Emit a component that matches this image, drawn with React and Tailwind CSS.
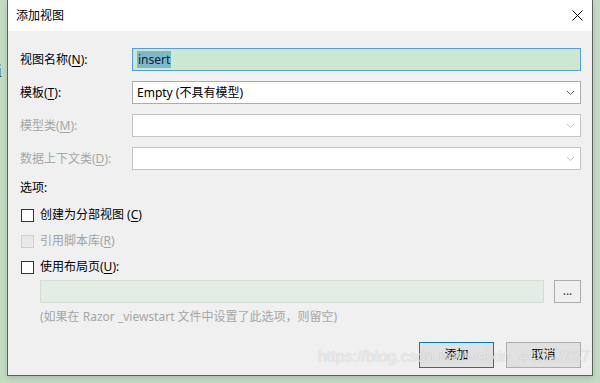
import { useState } from 'react';

function Chevron({ disabled }) {
  return (
    <svg width="9" height="6" viewBox="0 0 9 6" className="shrink-0">
      <polyline points="1,1 4.5,4.5 8,1" fill="none" stroke={disabled ? '#c4c4c4' : '#606060'} strokeWidth="1" />
    </svg>
  );
}

function Key({ k }) {
  return <span className="underline underline-offset-2">{k}</span>;
}

function Checkbox({ checked, disabled, children }) {
  return (
    <div className="flex items-center h-[16px]">
      <div className={`w-[13px] h-[13px] border ml-[1px] ${disabled ? 'border-[#cfcfcf] bg-[#e8e8e8]' : 'border-[#333333] bg-white'}`}>
        {checked && <span className="block text-[10px] leading-none">✓</span>}
      </div>
      <span className={`ml-[6px] ${disabled ? 'text-[#a2a2a2]' : 'text-black'}`}>{children}</span>
    </div>
  );
}

export default function App() {
  const [name] = useState('insert');

  return (
    <div className="w-[600px] h-[383px] bg-[#c3ddc3] flex font-['Noto_Sans','Noto_Sans_CJK_SC',sans-serif] text-[12px] overflow-hidden relative">
      <div className="w-[7px] shrink-0 overflow-hidden">
        <span className="block mt-[58px] -ml-[3px] font-['Liberation_Serif',serif] text-[18px] text-[#2a2a3a]">i</span>
      </div>

      <div className="w-[586px] h-[376px] shrink-0 border-x border-b border-[#5a625a] bg-[#f0f0f0] flex flex-col shadow-[0_2px_6px_rgba(0,0,0,0.15)]">
        <div className="h-[31px] bg-white flex items-center justify-between pl-[8px] pr-[9px]">
          <span className="text-black">添加视图</span>
          <svg width="11" height="11" viewBox="0 0 11 11">
            <path d="M0.5 0.5 L10.5 10.5 M10.5 0.5 L0.5 10.5" stroke="#000" strokeWidth="1" />
          </svg>
        </div>

        <div className="flex flex-col pt-[17px] pl-[12px] pr-[11px]">
          <div className="flex items-center h-[23px]">
            <span className="w-[112px] shrink-0">视图名称(<Key k="N" />):</span>
            <div className="flex-1 h-full bg-[#cde8d0] border border-[#529ce9] flex items-center pl-[4px]">
              <span className="bg-[#7db8c8] text-[#10203f] px-[1px] leading-[17px]">{name}</span>
            </div>
          </div>

          <div className="flex items-center h-[23px] mt-[10px]">
            <span className="w-[112px] shrink-0">模板(<Key k="T" />):</span>
            <div className="flex-1 h-full bg-white border border-[#adadad] flex items-center justify-between pl-[4px] pr-[5px]">
              <span>Empty (不具有模型)</span>
              <Chevron />
            </div>
          </div>

          <div className="flex items-center h-[23px] mt-[10px]">
            <span className="w-[112px] shrink-0 text-[#a6a6a6]">模型类(<Key k="M" />):</span>
            <div className="flex-1 h-full bg-white border border-[#c4c4c4] flex items-center justify-end pr-[5px]">
              <Chevron disabled />
            </div>
          </div>

          <div className="flex items-center h-[23px] mt-[10px]">
            <span className="w-[112px] shrink-0 text-[#a6a6a6]">数据上下文类(<Key k="D" />):</span>
            <div className="flex-1 h-full bg-white border border-[#c4c4c4] flex items-center justify-end pr-[5px]">
              <Chevron disabled />
            </div>
          </div>

          <div className="h-[16px] mt-[10px] flex items-center">选项:</div>

          <div className="mt-[11px]">
            <Checkbox>创建为分部视图 (<Key k="C" />)</Checkbox>
          </div>
          <div className="mt-[10px]">
            <Checkbox disabled>引用脚本库(<Key k="R" />)</Checkbox>
          </div>
          <div className="mt-[10px]">
            <Checkbox>使用布局页(<Key k="U" />):</Checkbox>
          </div>

          <div className="flex h-[23px] mt-[5px] pl-[20px] gap-[10px]">
            <div className="flex-1 bg-[#e3ede3] border border-[#d5dcd5]" />
            <div className="w-[27px] bg-[#f0f0f0] border border-[#adadad] flex items-center justify-center text-[#333] leading-none pb-[2px]">...</div>
          </div>

          <div className="h-[16px] mt-[6px] pl-[20px] flex items-center text-[#a6a6a6]">
            (如果在 Razor _viewstart 文件中设置了此选项，则留空)
          </div>

          <div className="flex justify-end gap-[12px] mt-[17px]">
            <div className="w-[75px] h-[26px] bg-[#e1e1e1] border border-[#0078d7] flex items-center justify-center">添加</div>
            <div className="w-[75px] h-[26px] bg-[#e1e1e1] border border-[#adadad] flex items-center justify-center">取消</div>
          </div>
        </div>
      </div>

      <div className="absolute left-[318px] top-[345px] font-['Liberation_Sans',sans-serif] text-[16px] text-white/70 [text-shadow:0_0_1px_rgba(0,0,0,0.25)]">
        https://blog.csdn.net/weixin_44652757
      </div>
    </div>
  );
}
